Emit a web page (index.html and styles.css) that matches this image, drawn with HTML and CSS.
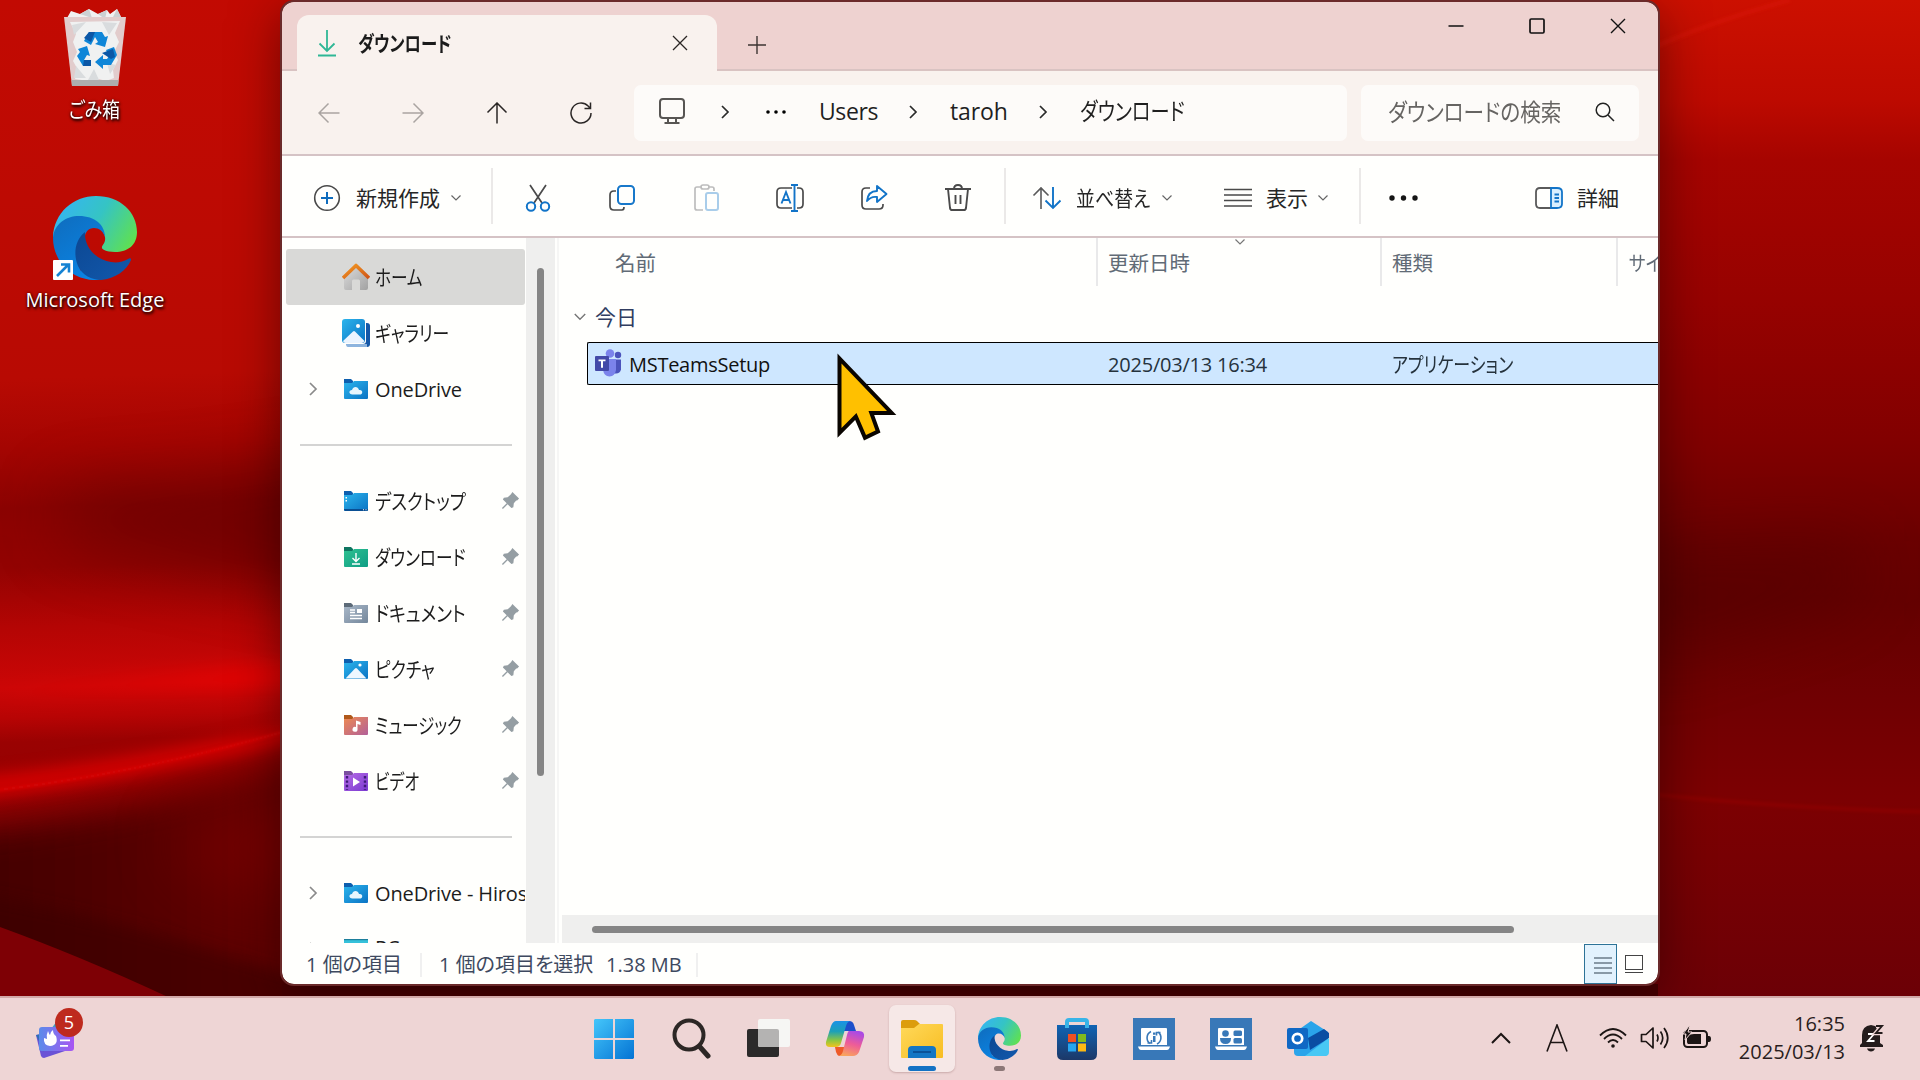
FILE: index.html
```
<!DOCTYPE html>
<html lang="ja">
<head>
<meta charset="utf-8">
<title>ダウンロード</title>
<link rel="stylesheet" href="styles.css">
</head>
<body>
<svg width="0" height="0" class="defs" aria-hidden="true">
  <defs>
    <linearGradient id="gBlue" x1="0" y1="0" x2="1" y2="1"><stop offset="0" stop-color="#2cb5ec"/><stop offset="1" stop-color="#0b73c4"/></linearGradient>
    <linearGradient id="gGreen" x1="0" y1="0" x2="1" y2="1"><stop offset="0" stop-color="#2fc191"/><stop offset="1" stop-color="#0f9d84"/></linearGradient>
    <linearGradient id="gGray" x1="0" y1="0" x2="1" y2="1"><stop offset="0" stop-color="#a9b8c8"/><stop offset="1" stop-color="#74879b"/></linearGradient>
    <linearGradient id="gMusic" x1="0" y1="0" x2="1" y2="1"><stop offset="0" stop-color="#ee8a50"/><stop offset="1" stop-color="#b2609a"/></linearGradient>
    <linearGradient id="gVideo" x1="0" y1="0" x2="1" y2="1"><stop offset="0" stop-color="#b66ce6"/><stop offset="1" stop-color="#7a3ad0"/></linearGradient>
    <linearGradient id="gRoof" x1="0" y1="0" x2="1" y2="1"><stop offset="0" stop-color="#f39a22"/><stop offset="1" stop-color="#cf5418"/></linearGradient>
    <linearGradient id="gWall" x1="0" y1="0" x2="1" y2="1"><stop offset="0" stop-color="#dcdcdc"/><stop offset="1" stop-color="#a2a2a2"/></linearGradient>
    <linearGradient id="gEdgeTop" x1="0" y1=".3" x2="1" y2=".7"><stop offset="0" stop-color="#35b5f2"/><stop offset=".5" stop-color="#35c4c4"/><stop offset="1" stop-color="#5fe052"/></linearGradient>
    <linearGradient id="gEdgeMid" x1="0" y1="0" x2=".6" y2="1"><stop offset="0" stop-color="#0f6cbd"/><stop offset="1" stop-color="#0a84e4"/></linearGradient>
    <linearGradient id="gEdgeLow" x1="0" y1="0" x2="1" y2="1"><stop offset="0" stop-color="#0c4792"/><stop offset="1" stop-color="#1259ad"/></linearGradient>
    <symbol id="edge" viewBox="0 0 84 84">
      <path fill="url(#gEdgeTop)" d="M0 41C1 17 20 0 43 0c24 0 41 16 41 36 0 13-9 20-22 20-9 0-14-3-13-5 0-2 4-4 3-10C51 34 44 28 32 24z"/>
      <path fill="url(#gEdgeMid)" d="M0 42c1-14 13-22 26-22 16 0 26 9 26 21-2-6-6-9-11-9-6 0-10 5-9 12l-5 30 20 10C20 86 0 66 0 42z"/>
      <path fill="url(#gEdgeLow)" d="M32 36c-10 8-12 22-7 34 4 9 14 14 23 14 14-1 26-10 30-20 0-2-1-2-3-1-5 3-11 4-17 3-14-2-27-14-26-30z"/>
    </symbol>
    <symbol id="chevR" viewBox="0 0 10 16"><path d="M2 2l6 6-6 6" fill="none" stroke="currentColor" stroke-width="1.700"/></symbol>
    <symbol id="chevD" viewBox="0 0 12 8"><path d="M1.500 1.500l4.500 4.500 4.500-4.500" fill="none" stroke="currentColor" stroke-width="1.200"/></symbol>
    <symbol id="pin" viewBox="0 0 20 20"><path fill="#959ea3" d="M12 1l7 7-2 2-1 0-2.500 3-.5 4-2 1-4-4L2 19l-1-1 5-5-4-4 1-2 4-.5 3.500-3z"/></symbol>
    <symbol id="fOne" viewBox="0 0 24 20"><path fill="#0d5fae" d="M0 0h7l2 2v4H0z"/><path fill="url(#gBlue)" d="M0 4h8l2-2h14v17a1 1 0 0 1-1 1H1a1 1 0 0 1-1-1z"/><path fill="#e8f6fd" d="M8.500 15.500c-4 0-4-4.500-.5-4.500 1-4 6-4 7 0 4-1 4.500 4.500.5 4.500z"/></symbol>
    <symbol id="fDesk" viewBox="0 0 24 20"><path fill="#0d5fae" d="M0 0h7l2 2v4H0z"/><path fill="url(#gBlue)" d="M0 4h8l2-2h14v17a1 1 0 0 1-1 1H1a1 1 0 0 1-1-1z"/><path fill="#0a4f93" d="M0 18h24v1l-1 1H1l-1-1z"/><path fill="#fff" d="M1.500 6h1.500v1.500H1.500zM1.500 9h1.500v1.500H1.500zM19 18.300h1v1h-1zM21.500 18.300h1v1h-1z"/></symbol>
    <symbol id="fDown" viewBox="0 0 24 20"><path fill="#0f7560" d="M0 0h7l2 2v4H0z"/><path fill="url(#gGreen)" d="M0 4h8l2-2h14v17a1 1 0 0 1-1 1H1a1 1 0 0 1-1-1z"/><path fill="none" stroke="#fff" stroke-width="1.400" d="M12 6v8M8.500 11l3.500 3.500 3.500-3.500M8 17h8"/></symbol>
    <symbol id="fDoc" viewBox="0 0 24 20"><path fill="#5d6b78" d="M0 0h7l2 2v4H0z"/><path fill="url(#gGray)" d="M0 4h8l2-2h14v17a1 1 0 0 1-1 1H1a1 1 0 0 1-1-1z"/><path fill="none" stroke="#fff" stroke-width="1.300" d="M6 7h5M6 9.500h5M6 12.500h12M6 15.500h12"/><path fill="#fff" d="M13 6h5v4h-5z"/></symbol>
    <symbol id="fPic" viewBox="0 0 24 20"><path fill="#0d5fae" d="M0 0h7l2 2v4H0z"/><path fill="url(#gBlue)" d="M0 4h8l2-2h14v17a1 1 0 0 1-1 1H1a1 1 0 0 1-1-1z"/><path fill="#eef7ff" d="M1.500 19.500L11 9.500q1-1 2 0l9.500 10z"/><circle cx="16" cy="6" r="1.600" fill="#fff"/></symbol>
    <symbol id="fMus" viewBox="0 0 24 20"><path fill="#b0591a" d="M0 0h7l2 2v4H0z"/><path fill="url(#gMusic)" d="M0 4h8l2-2h14v17a1 1 0 0 1-1 1H1a1 1 0 0 1-1-1z"/><path fill="#fff" d="M12 5.500l4.500 1.500v3l-3-1v5a2.500 2.500 0 1 1-1.500-2z"/></symbol>
    <symbol id="fVid" viewBox="0 0 24 20"><path fill="#7b4fa0" d="M0 0h7l2 2v4H0z"/><path fill="url(#gVideo)" d="M0 4h8l2-2h14v17a1 1 0 0 1-1 1H1a1 1 0 0 1-1-1z"/><path fill="#fff" d="M9 6.500l7 4.500-7 4.500z"/><path fill="none" stroke="#3d1a78" stroke-width="2.400" stroke-dasharray="2.400 2" d="M3 5v14M21 5v14"/></symbol>
  </defs>
</svg>

<svg class="wallpaper" viewBox="0 0 1920 1080" preserveAspectRatio="none" aria-hidden="true">
  <defs>
    <linearGradient id="wl" x1="0" y1="0" x2="30" y2="996" gradientUnits="userSpaceOnUse">
      <stop offset="0" stop-color="#c20a02"/><stop offset=".2" stop-color="#bd0a03"/><stop offset=".38" stop-color="#b80a03"/><stop offset=".45" stop-color="#a40502"/><stop offset=".51" stop-color="#8b0302"/><stop offset=".57" stop-color="#930302"/><stop offset=".63" stop-color="#b40504"/><stop offset=".69" stop-color="#cb0606"/><stop offset=".72" stop-color="#b80404"/><stop offset=".745" stop-color="#9a0202"/><stop offset="1" stop-color="#7c0004"/>
    </linearGradient>
    <linearGradient id="wr" x1="0" y1="0" x2="0" y2="996" gradientUnits="userSpaceOnUse">
      <stop offset="0" stop-color="#cc1000"/><stop offset=".1" stop-color="#bd0a00"/><stop offset=".16" stop-color="#a60400"/><stop offset=".3" stop-color="#970200"/><stop offset=".44" stop-color="#820000"/><stop offset=".55" stop-color="#690000"/><stop offset=".6" stop-color="#640000"/><stop offset=".7" stop-color="#700002"/><stop offset=".8" stop-color="#7c0002"/><stop offset=".86" stop-color="#780003"/><stop offset="1" stop-color="#6c0006"/>
    </linearGradient>
    <linearGradient id="hi" x1="0" y1="0" x2="282" y2="0" gradientUnits="userSpaceOnUse"><stop offset="0" stop-color="#f00a08" stop-opacity=".05"/><stop offset="1" stop-color="#f00a08" stop-opacity=".6"/></linearGradient>
    <linearGradient id="fold" x1="0" y1="0" x2="282" y2="0" gradientUnits="userSpaceOnUse"><stop offset="0" stop-color="#440001"/><stop offset="1" stop-color="#640002"/></linearGradient>
    <filter id="b6" x="-20%" y="-100%" width="140%" height="300%"><feGaussianBlur stdDeviation="8"/></filter>
    <filter id="b15" x="-30%" y="-80%" width="160%" height="260%"><feGaussianBlur stdDeviation="17"/></filter>
    <filter id="b30" x="-60%" y="-120%" width="220%" height="340%"><feGaussianBlur stdDeviation="32"/></filter>
    <filter id="b2" x="-20%" y="-60%" width="140%" height="220%"><feGaussianBlur stdDeviation="1.500"/></filter>
  </defs>
  <rect width="960" height="1080" fill="url(#wl)"/>
  <rect x="960" width="960" height="1080" fill="url(#wr)"/>
  <path d="M60 490Q200 485 380 450V610Q200 570 60 540z" fill="#560000" opacity=".5" filter="url(#b30)"/>
  <path d="M-20 688Q150 672 380 652V684Q150 694-20 704z" fill="url(#hi)" filter="url(#b6)"/>
  <path d="M-40 830Q150 812 330 750V1060H-40z" fill="url(#fold)" filter="url(#b15)"/>
  <path d="M-20 776Q140 760 320 718V734Q140 780-20 798z" fill="#e80606" opacity=".75" filter="url(#b6)"/>
  <path d="M-10 791Q140 774 300 727" fill="none" stroke="#f20909" stroke-width="2" opacity=".6" filter="url(#b2)"/>
  <path d="M170 830L360 780V900L200 880z" fill="#820203" opacity=".6" filter="url(#b30)"/>
  <path d="M-20 895Q130 920 320 985V1040H-20z" fill="#3a0001" opacity=".6" filter="url(#b6)"/>
  <path d="M0 927Q80 956 168 997H0z" fill="#7e0005"/>
  <path d="M1650 49Q1710 22 1790 0" fill="none" stroke="#dc1608" stroke-width="5" opacity=".4" filter="url(#b2)"/>
  <path d="M1640 550L1860 540V600L1640 670z" fill="#500000" opacity=".45" filter="url(#b30)"/>
  <path d="M1650 794Q1780 808 1930 812" fill="none" stroke="#960000" stroke-width="4" opacity=".5" filter="url(#b2)"/>
  <rect x="282" y="984" width="1376" height="12" fill="#480002"/>
</svg>

<main class="desktop">
  <div class="shortcut bin">
    <svg width="62" height="78" viewBox="0 0 62 78">
      <path fill="#f1f1f1" d="M3 9l4-7 9 3 9-5 9 5 9-4 3 4 7-5 4 8v5H3z"/>
      <path fill="#ccd0d2" d="M16 5l9-5 3 9zM34 5l9-4-2 9zM53 0l4 8-9 2z"/>
      <path fill="#e2cccc" d="M0 8l62 0-8 69H8z"/>
      <path fill="#f0f1f1" d="M6 13l50-1-5 12 4 9-5 10 4 8-5 10 1 8-8 3-7-2-9 2-8-1-7-1 3-9-5-9 4-9-4-10 3-8z"/>
      <path fill="#d9dcde" d="M8 16l14-3-12 13zM43 54l9 2-6 9zM12 57l10 12H10zM38 13l15 1-8 12zM30 60l5 11H24z"/>
      <path fill="#adadad" d="M7.500 71h47l-.5 6H8z"/>
      <g fill="#0f86d8"><path d="M25 23h13l3 5 3-1-3 11-10-3 3-2-3-5-4 8-7-4z"/><path d="M14 40l9-3 3 10-3-1-3 5h7v6h-8l-6-10 3-4z"/><path d="M31 53l8-7v4h4l2-3-3-6 8-3 3 8-6 10h-8v4z"/></g>
      <path fill="#0b57a6" d="M25 23h6l-4 10-7-4zM20 51h7v6h-8zM38 44l11-4 2 8-4 2z"/>
    </svg>
    <span class="sx85">ごみ箱</span>
  </div>
  <div class="shortcut msedge">
    <div class="logo"><svg width="84" height="84"><use href="#edge"/></svg>
      <svg class="arrow" width="20" height="20" viewBox="0 0 20 20"><rect width="20" height="20" rx="1" fill="#fff"/><path d="M4 16L15.500 4.500M8 4.500h8v8" fill="none" stroke="#1583d3" stroke-width="2.600"/></svg></div>
    <span>Microsoft Edge</span>
  </div>

  <section class="window">
    <header class="titlebar">
      <div class="tab">
        <svg width="22" height="28" viewBox="0 0 22 28" fill="none" stroke="#2fb795" stroke-width="1.800"><path d="M11 1v21M3.500 14.500L11 22l7.500-7.500M2 26.500h18"/></svg>
        <span class="tab-title sx77">ダウンロード</span>
        <svg class="tab-close" width="16" height="16" viewBox="0 0 16 16" fill="none" stroke="#2b2624" stroke-width="1.300"><path d="M1 1l14 14M15 1L1 15"/></svg>
      </div>
      <svg class="newtab" width="18" height="18" viewBox="0 0 18 18" fill="none" stroke="#3d3432" stroke-width="1.400"><path d="M9 0v18M0 9h18"/></svg>
      <div class="caption">
        <svg width="16" height="16" viewBox="0 0 16 16" stroke="#111" stroke-width="1.400"><path d="M.5 8h15"/></svg>
        <svg width="16" height="16" viewBox="0 0 16 16" fill="none" stroke="#111" stroke-width="1.700"><rect x="1" y="1" width="14" height="14" rx="1.200"/></svg>
        <svg width="16" height="16" viewBox="0 0 16 16" fill="none" stroke="#111" stroke-width="1.400"><path d="M1 1l14 14M15 1L1 15"/></svg>
      </div>
    </header>

    <nav class="navbar">
      <div class="navbtns">
        <svg class="dim" viewBox="0 0 22 22"><path d="M21.500 11H1M10.500 1.500L1 11l9.500 9.500"/></svg>
        <svg class="dim" viewBox="0 0 22 22"><path d="M.5 11H21M11.500 1.500L21 11l-9.500 9.500"/></svg>
        <svg viewBox="0 0 22 22"><path d="M11 21.500V1M1.500 10.500L11 1l9.500 9.500"/></svg>
        <svg viewBox="0 0 22 22"><path d="M21 11a10 10 0 1 1-2.900-7L20 6M20.500 .5v6h-6"/></svg>
      </div>
      <div class="address">
        <svg class="pc" width="28" height="28" viewBox="0 0 28 28" fill="none" stroke="#575553" stroke-width="2"><rect x="2" y="2" width="24" height="19" rx="3"/><path d="M10 21v4M18 21v4M6.500 26h15"/></svg>
        <svg class="sep s1" width="10" height="16"><use href="#chevR"/></svg>
        <svg class="more" width="20" height="4" viewBox="0 0 20 4"><circle cx="2" cy="2" r="1.800"/><circle cx="10" cy="2" r="1.800"/><circle cx="18" cy="2" r="1.800"/></svg>
        <span class="crumb c1">Users</span>
        <svg class="sep s2" width="10" height="16"><use href="#chevR"/></svg>
        <span class="crumb c2">taroh</span>
        <svg class="sep s3" width="10" height="16"><use href="#chevR"/></svg>
        <span class="crumb sx79">ダウンロード</span>
      </div>
      <div class="search"><span class="sx85">ダウンロードの検索</span>
        <svg width="20" height="20" viewBox="0 0 20 20" fill="none" stroke="#222" stroke-width="1.500"><circle cx="8" cy="8" r="6.800"/><path d="M13 13l6 6"/></svg>
      </div>
    </nav>

    <div class="toolbar">
      <div class="tool new"><svg width="28" height="28" viewBox="0 0 28 28" fill="none" stroke-width="1.600"><circle cx="14" cy="14" r="12.300" stroke="#4a4a4a"/><path stroke="#0f6cbd" stroke-width="2" d="M14 8v12M8 14h12"/></svg><span>新規作成</span><svg class="chev" width="12" height="8"><use href="#chevD"/></svg></div>
      <div class="tool icons">
        <svg viewBox="0 0 28 28"><path stroke="#4a4a4a" d="M6 1l12 18M22 1L10 19"/><g stroke="#1274c8" stroke-width="2"><circle cx="7" cy="22.500" r="4.200"/><circle cx="21" cy="22.500" r="4.200"/></g></svg>
        <svg viewBox="0 0 28 28"><path stroke="#4a4a4a" d="M8 7H6q-4 0-4 4v11q0 4 4 4h8q2 0 2-3"/><rect x="10" y="2" width="16" height="18" rx="3.500" stroke="#1878ca" stroke-width="2"/></svg>
        <svg viewBox="0 0 28 28"><path stroke="#bdbdbd" d="M9 3H5q-2 0-2 2v19q0 2 2 2h6M17 3h3q2 0 2 2v2"/><rect x="9" y="1" width="8" height="4" rx="2" stroke="#bdbdbd"/><rect x="14" y="9" width="12" height="17" rx="2" stroke="#a9cdea" stroke-width="2"/></svg>
        <svg viewBox="0 0 28 28"><path stroke="#4a4a4a" d="M16 4H5q-4 0-4 4v12q0 4 4 4h11M21 4h2q4 0 4 4v12q0 4-4 4h-2"/><path stroke="#1274c8" stroke-width="1.900" d="M5.500 19.500L10 8l4.500 11.500M7 16h6M18.500 1v26M15 1h7M15 27h7"/></svg>
        <svg viewBox="0 0 28 28"><path stroke="#4a4a4a" d="M10 4H6q-4 0-4 4v13q0 4 4 4h13q4 0 4-4v-1"/><path stroke="#1274c8" stroke-width="1.900" stroke-linejoin="round" d="M17 2l9.500 8L17 18v-5q-6-1-10 4 1-10 10-10z"/></svg>
        <svg viewBox="0 0 28 28"><path stroke="#4a4a4a" stroke-width="1.900" d="M1 5h26M4 5l2 19q.3 2 2 2h12q1.700 0 2-2l2-19M10 5q0-4 4-4t4 4M11.500 11v9M16.500 11v9"/></svg>
      </div>
      <div class="tool sort"><svg width="30" height="24" viewBox="0 0 30 24" fill="none" stroke-width="1.600"><path stroke="#5a5a5a" d="M9 23V2M1.500 9.500L9 2l7.500 7.500"/><path stroke="#1274c8" stroke-width="1.900" d="M21 1v21M13.500 14.500L21 22l7.500-7.500"/></svg><span class="sx90">並べ替え</span><svg class="chev" width="12" height="8"><use href="#chevD"/></svg></div>
      <div class="tool view"><svg width="28" height="20" viewBox="0 0 28 20" stroke="#4a4a4a" stroke-width="1.500"><path d="M0 1.500h28M0 7h28M0 12.500h28M0 18h28"/></svg><span>表示</span><svg class="chev" width="12" height="8"><use href="#chevD"/></svg></div>
      <div class="tool dots"><svg width="30" height="6" viewBox="0 0 30 6" fill="#151515"><circle cx="3" cy="3" r="2.700"/><circle cx="14.500" cy="3" r="2.700"/><circle cx="26" cy="3" r="2.700"/></svg></div>
      <div class="tool details"><svg width="30" height="24" viewBox="0 0 30 24" fill="none" stroke-width="1.800"><path stroke="#5a5a5a" d="M17 2H6Q2 2 2 6v12q0 4 4 4h11"/><path stroke="#1274c8" fill="#d9efff" d="M17 2h6q5 0 5 4v12q0 4-5 4h-6z"/><path stroke="#1274c8" d="M20.500 8.500h4.500M20.500 12h4.500M20.500 15.500h4.500"/></svg><span>詳細</span></div>
    </div>

    <div class="content">
      <aside class="sidebar">
        <div class="item active"><svg class="ic big" viewBox="0 0 28 28"><path fill="url(#gWall)" d="M2 13L14 3l12 10v12a2 2 0 0 1-2 2h-6V18q0-1.500-1.500-1.500h-5Q10 16.500 10 18v9H4a2 2 0 0 1-2-2z"/><path fill="none" stroke="url(#gRoof)" stroke-width="3.600" stroke-linejoin="round" d="M1 15L14 2.500 27 15"/></svg><span class="sx78">ホーム</span></div>
        <div class="item"><svg class="ic big" viewBox="0 0 28 28"><path fill="#1558a8" d="M7 4h18q3 0 3 3v18q0 3-3 3H7l-3-3z"/><path fill="#8db4de" d="M4 25h21v3H6q-2 0-2-3z"/><rect width="24" height="25" fill="#fffffd" rx="3"/><rect width="23" height="24" rx="3" fill="url(#gBlue)"/><path fill="#eaf4ff" d="M1 22L11 12.500q1-1 2 0L22.500 22q-1 2-3 2h-16q-2 0-2.500-2z"/><circle cx="16" cy="7" r="2" fill="#fff"/></svg><span class="sx79">ギャラリー</span></div>
        <div class="item"><svg class="exp" width="10" height="16"><use href="#chevR"/></svg><svg class="ic"><use href="#fOne"/></svg><span class="lat">OneDrive</span></div>
        <div class="item line"><hr></div>
        <div class="item"><svg class="ic"><use href="#fDesk"/></svg><span class="sx82">デスクトップ</span><svg class="pin"><use href="#pin"/></svg></div>
        <div class="item"><svg class="ic"><use href="#fDown"/></svg><span class="sx78">ダウンロード</span><svg class="pin"><use href="#pin"/></svg></div>
        <div class="item"><svg class="ic"><use href="#fDoc"/></svg><span class="sx83">ドキュメント</span><svg class="pin"><use href="#pin"/></svg></div>
        <div class="item"><svg class="ic"><use href="#fPic"/></svg><span class="sx79">ピクチャ</span><svg class="pin"><use href="#pin"/></svg></div>
        <div class="item"><svg class="ic"><use href="#fMus"/></svg><span class="sx77">ミュージック</span><svg class="pin"><use href="#pin"/></svg></div>
        <div class="item"><svg class="ic"><use href="#fVid"/></svg><span class="sx75">ビデオ</span><svg class="pin"><use href="#pin"/></svg></div>
        <div class="item line"><hr></div>
        <div class="item"><svg class="exp" width="10" height="16"><use href="#chevR"/></svg><svg class="ic"><use href="#fOne"/></svg><span class="lat">OneDrive - Hiros</span></div>
        <div class="item thispc"><svg class="exp" width="10" height="16"><use href="#chevR"/></svg><svg class="ic" viewBox="0 0 24 20"><path fill="#36c1da" d="M0 0h24v20H0z"/><path fill="#1d7f9c" d="M0 0h24v1.200H0z"/></svg><span class="lat">PC</span></div>
      </aside>
      <div class="vtrack"><div class="vthumb"></div></div>
      <div class="list">
        <div class="columns">
          <div class="col name">名前</div>
          <div class="col date">更新日時<svg class="sorted" width="12" height="8"><use href="#chevD"/></svg></div>
          <div class="col kind">種類</div>
          <div class="col size"><span class="sx85">サイズ</span></div>
        </div>
        <div class="group"><svg width="14" height="10" viewBox="0 0 12 8"><use href="#chevD"/></svg><span>今日</span></div>
        <div class="file">
          <svg width="27" height="28" viewBox="0 0 27 28"><circle cx="23" cy="6" r="3.200" fill="#4b53bc"/><path fill="#4b53bc" d="M19 10.500h7v10q-1 4-5 4h-2z"/><circle cx="15" cy="4.500" r="4.300" fill="#7b83eb"/><path fill="#7b83eb" d="M8 10h13v11q-1 6-6.500 6.500Q9 27 8 21z"/><rect y="7" width="14" height="15" rx="1" fill="#4349a8"/><path fill="#fff" d="M3.500 10.500h7v1.800H8v6.500H6v-6.500H3.500z"/></svg>
          <span class="fname">MSTeamsSetup</span><span class="fdate">2025/03/13 16:34</span><span class="fkind sx80">アプリケーション</span>
        </div>
        <div class="empty"></div>
        <div class="htrack"><div class="hthumb"></div></div>
      </div>
    </div>

    <footer class="status">
      <span class="count">1 個の項目</span>
      <span class="sel">1 個の項目を選択</span>
      <span class="bytes">1.38 MB</span>
      <div class="modes">
        <div class="mode on"><svg width="18" height="17" viewBox="0 0 18 17" stroke="#2f4150" stroke-width="1.200"><path d="M0 1h18M0 6h18M0 11h18M0 16h18"/></svg></div>
        <div class="mode"><svg width="18" height="18" viewBox="0 0 18 18" fill="none" stroke="#444" stroke-width="1"><rect x=".5" y=".5" width="17" height="14"/><path d="M0 17.500h18"/></svg></div>
      </div>
    </footer>
  </section>

  <svg class="cursor" width="70" height="96" viewBox="-4 -4 70 96"><path d="M4.500 8.500L50 56H31.500L38.500 75.500 29 80 19.500 58 4.500 73z" fill="#ffc000" stroke="#0a0500" stroke-width="8" paint-order="stroke" stroke-miterlimit="8"/></svg>
</main>

<footer class="taskbar">
  <div class="widgets">
    <svg width="40" height="40" viewBox="0 0 40 40"><defs><linearGradient id="gw"><stop offset="0" stop-color="#5b8bea"/><stop offset="1" stop-color="#a855f2"/></linearGradient></defs><path fill="#6a52d6" d="M0 15l24-4 5 20-21 7q-2 0-3-2z"/><path fill="#2f6fb5" d="M0 15l5-1 3 18z"/><path fill="#3e9fc4" d="M15 9l6-8 10 6v6z"/><rect x="3" y="7" width="35" height="24" rx="3" fill="url(#gw)"/><path fill="#fff" d="M12 11q1 3 2 4 0-3 3-5 0 4 3 6 3 9-6 10-7-1-6-8l3 1q-1-4 1-8zM24 19.500h10v1.700H24zM24 25h8v1.700h-8z"/></svg>
    <span class="badge">5</span>
  </div>
  <div class="apps">
    <div class="app"><svg width="42" height="42" viewBox="0 0 42 42"><defs><linearGradient id="gs" x1="0" y1="0" x2="42" y2="42" gradientUnits="userSpaceOnUse"><stop offset="0" stop-color="#46c8fb"/><stop offset="1" stop-color="#0271d3"/></linearGradient></defs><path fill="url(#gs)" d="M2 1h18v19H1V2zM22 1h18l1 1v18H22zM1 22h19v19H2l-1-1zM22 22h19v18l-1 1H22z"/></svg></div>
    <div class="app"><svg width="40" height="42" viewBox="0 0 40 42" fill="none" stroke="#2c2725"><circle cx="18" cy="17" r="14.500" stroke-width="4"/><path stroke-width="5" stroke-linecap="round" d="M29 29l8 9"/></svg></div>
    <div class="app"><svg width="44" height="42" viewBox="0 0 44 42"><rect x="1" y="11" width="32" height="28" rx="2" fill="#2b2a2a"/><rect x="12" y="1" width="32" height="28" rx="2" fill="#f6f6f4"/><path fill="#b4b3b2" d="M12 11h19q2 0 2 2v16H14q-2 0-2-2z"/></svg></div>
    <div class="app"><svg width="40" height="38" viewBox="0 0 40 38"><defs><linearGradient id="c1" x1="0" y1="0" x2="0" y2="1"><stop offset="0" stop-color="#1a92e6"/><stop offset=".4" stop-color="#1ca0b8"/><stop offset=".75" stop-color="#8ec63f"/><stop offset="1" stop-color="#f2c31c"/></linearGradient><linearGradient id="c2" x1=".6" y1="0" x2=".3" y2="1"><stop offset="0" stop-color="#a94ae6"/><stop offset=".5" stop-color="#ee5c98"/><stop offset="1" stop-color="#f9a45c"/></linearGradient></defs><path fill="#1c4fcb" d="M20 1h4q4 0 5 4l2 6H18z"/><path fill="#ee5a28" d="M10 27h11l-3 7q-1 2-4 2-2-1-3-4z"/><path fill="url(#c1)" d="M11 1h14q-3 1-4 5l-5 17q-1 4-5 4H5q-5 0-4-5L6 6q2-5 5-5z"/><path fill="url(#c2)" d="M24 11h10q6 0 5 6l-5 15q-2 4-6 4H14q3-1 4-5l4-16q1-4 2-4z"/></svg></div>
    <div class="app open"><svg width="42" height="40" viewBox="0 0 42 40"><defs><linearGradient id="ge" x1="0" y1="0" x2="1" y2="1"><stop offset="0" stop-color="#ffd95a"/><stop offset="1" stop-color="#f8bd22"/></linearGradient></defs><path fill="#dc9d0c" d="M0 3q0-2 2-2h11q2 0 3 1l3 3v6H0z"/><path fill="url(#ge)" d="M0 9h13l5-4h23q1 0 1 1v32q0 1-1 1H1q-1 0-1-1z"/><path fill="#1476c4" d="M7 39V31q0-4 4-4h20q4 0 4 4v8z"/><path stroke="#0b4f94" stroke-width="1.800" d="M12 33h18"/></svg><i class="bar"></i></div>
    <div class="app"><svg width="43" height="43"><use href="#edge"/></svg><i class="bar small"></i></div>
    <div class="app"><svg width="42" height="44" viewBox="0 0 42 44"><defs><linearGradient id="gt" x1="0" y1="0" x2="0" y2="1"><stop offset="0" stop-color="#0f64b4"/><stop offset="1" stop-color="#1c3868"/></linearGradient></defs><path fill="url(#gt)" d="M1 8h40v29q0 6-6 6H7q-6 0-6-6z"/><path fill="none" stroke="#38b4e8" stroke-width="4" d="M11 11V5q0-2 2-2h16q2 0 2 2v6"/><path fill="#f05022" d="M12 17h8v8h-8z"/><path fill="#7fba1e" d="M22 17h8v8h-8z"/><path fill="#25a6f0" d="M12 26.500h8v8h-8z"/><path fill="#fdb913" d="M22 26.500h8v8h-8z"/></svg></div>
    <div class="app"><svg width="42" height="42" viewBox="0 0 42 42"><path fill="#3878b8" d="M0 0h42v42H0z"/><path fill="#fff" d="M9 10h24q1 0 1 1v16H8V11q0-1 1-1zM5 28.500h32q-1 3.500-3 3.500H8q-2 0-3-3.500z"/><g fill="none" stroke="#3878b8" stroke-width="1.600"><path d="M18 13.500a7 7 0 0 0-1 12M24 26a7 7 0 0 0 1-12M14.500 25h4v-3M27.500 14.500h-4v3"/></g><path fill="#3878b8" d="M20 14.500h2.500v2.200H20zM20 18h2.500v6H20z"/></svg></div>
    <div class="app"><svg width="42" height="42" viewBox="0 0 42 42"><path fill="#3878b8" d="M0 0h42v42H0z"/><path fill="#fff" d="M9 10h24q1 0 1 1v16H8V11q0-1 1-1zM5 28.500h32q-1 3.500-3 3.500H8q-2 0-3-3.500z"/><g fill="#3878b8"><circle cx="15.500" cy="15.500" r="3.300"/><path d="M10 20h11q0 6-5.500 6T10 20z"/><rect x="23.500" y="12.500" width="8.500" height="5.500" rx="1.500"/><rect x="23.500" y="20" width="8.500" height="5.500" rx="1.500"/></g></svg></div>
    <div class="app"><svg width="44" height="38" viewBox="0 0 44 38"><path fill="#2aa4ea" d="M8 13L25 1l17 11v20q0 4-4 4H12q-4 0-4-4z"/><path fill="#0a4da2" d="M22 18l16-9 5 4v5L24 30z"/><path fill="#48c8f4" d="M19 36l24-18v14q0 4-4 4z"/><rect x="1" y="8" width="21" height="21" rx="2" fill="#1068c4"/><circle cx="11.500" cy="18.500" r="4.700" fill="none" stroke="#fff" stroke-width="2.700"/></svg></div>
  </div>
  <div class="tray">
    <svg class="t-up" width="20" height="12" viewBox="0 0 20 12" fill="none" stroke="#1c1514" stroke-width="2"><path d="M1 11l9-9 9 9"/></svg>
    <svg class="t-ime" width="22" height="28" viewBox="0 0 22 28" fill="none" stroke="#1c1514" stroke-width="1.600"><path d="M1 27.500L11 1l10 26.500M4.500 18.500h13"/></svg>
    <svg class="t-wifi" width="28" height="22" viewBox="0 0 28 22" fill="none" stroke="#1c1514" stroke-width="1.800"><path d="M1 8.500q13-13 26 0M5 12q9-9 18 0M9 15.500q5-5 10 0"/><circle cx="14" cy="19" r="1.800" fill="#1c1514" stroke="none"/></svg>
    <svg class="t-snd" width="30" height="24" viewBox="0 0 30 24" fill="none" stroke="#1c1514" stroke-width="1.700" stroke-linejoin="round"><path d="M1.500 8.500h4.500l7-6.500v20l-7-6.500H1.500zM17 8.500q2 3.500 0 7M20.500 5.500q4.500 6.500 0 13M24 2q7.500 10 0 20"/></svg>
    <svg class="t-bat" width="30" height="24" viewBox="0 0 30 24"><rect x="2" y="5" width="23" height="16" rx="3.500" fill="none" stroke="#1c1514" stroke-width="2"/><path fill="#1c1514" d="M5 9l7-1h7v10H6q-1-1-1-2zM26 10h1q2 0 2 3t-2 3h-1z"/><path d="M7 0L1 8h3l-1 6 7-8H6l2-6z" fill="#1c1514" stroke="#eed5d5" stroke-width="1"/></svg>
    <div class="clock"><span>16:35</span><span>2025/03/13</span></div>
    <svg class="t-bell" width="26" height="28" viewBox="0 0 26 28"><path fill="#241c1c" d="M3 19V11q0-9 9-10 9 1 9 10v8l3 2v2H1v-2zM8 24.500h8q-1 3-4 3t-4-3z"/><path d="M9 10h6l-6 7h6.500" fill="none" stroke="#fff" stroke-width="1.800"/><path d="M17 2h6l-6 7h6.500" fill="none" stroke="#eed5d5" stroke-width="4.500"/><path d="M17 2h6l-6 7h6.500" fill="none" stroke="#241c1c" stroke-width="1.900"/></svg>
  </div>
</footer>
</body>
</html>
```
FILE: styles.css
```
* { box-sizing: border-box; }
body {
  margin: 0;
  width: 1920px;
  height: 1080px;
  overflow: hidden;
  background: #480002;
  font-family: "Open Sans", "Noto Sans CJK JP", sans-serif;
  font-size: 21px;
  line-height: 28px;
  color: #262626;
  display: flex;
  flex-direction: column;
}
svg { display: block; flex: none; }
span { white-space: nowrap; font-feature-settings: "palt"; }
.defs { position: absolute; }
.wallpaper { position: absolute; inset: 0; width: 1920px; height: 1080px; }

/* condensed kana widths */
.sx75, .sx77, .sx78, .sx79, .sx80, .sx82, .sx83, .sx85, .sx90 { display: inline-block; transform-origin: 0 50%; }
.sx75 { transform: scaleX(.755); }
.sx77 { transform: scaleX(.78); }
.sx78 { transform: scaleX(.79); }
.sx79 { transform: scaleX(.8); }
.sx80 { transform: scaleX(.81); }
.sx82 { transform: scaleX(.83); }
.sx83 { transform: scaleX(.845); }
.sx85 { transform: scaleX(.858); }
.sx90 { transform: scaleX(.9); }

.desktop { position: relative; height: 996px; flex: none; }

/* desktop icons */
.shortcut {
  position: absolute;
  left: 0;
  width: 190px;
  display: flex;
  flex-direction: column;
  align-items: center;
  color: #fff;
  font-size: 20px;
  text-shadow: 1px 2px 3px #000, 0 0 3px rgba(0,0,0,.7);
}
.bin { top: 9px; gap: 8px; }
.bin span { font-size: 21px; transform-origin: 42% 50%; }
.msedge { top: 196px; gap: 6px; }
.logo { position: relative; }
.arrow { position: absolute; left: 0; bottom: 0; }

/* window */
.window {
  position: absolute;
  left: 282px;
  top: 2px;
  width: 1376px;
  height: 982px;
  border-radius: 12px;
  overflow: hidden;
  background: #fffffd;
  display: flex;
  flex-direction: column;
  outline: 2px solid #6b2a2a;
  box-shadow: 0 12px 50px rgba(20,0,0,.5);
}
.titlebar { height: 69px; background: #eed2d0; border-bottom: 2px solid #d9c3c2; display: flex; padding-left: 15px; flex: none; }
.tab {
  width: 420px;
  height: 56px;
  margin-top: 13px;
  border-radius: 12px 12px 0 0;
  background: #f9f2ee;
  display: flex;
  align-items: center;
  padding: 0 29px 1px 19px;
}
.tab-title { margin-left: 20px; font-weight: 600; color: #1b1b1b; }
.tab-close { margin-left: auto; }
.newtab { margin: 34px 0 0 31px; }
.caption { margin-left: auto; display: flex; height: 48px; }
.caption svg { margin: 16px 32px 0 33px; }

.navbar { height: 85px; background: #f9f2ee; border-bottom: 2px solid #d5c3c5; display: flex; align-items: center; padding-right: 19px; flex: none; }
.navbtns { display: flex; gap: 62px; padding-left: 36px; width: 352px; }
.navbtns svg { width: 22px; height: 22px; fill: none; stroke: #2a2625; stroke-width: 1.500; }
.navbtns .dim { stroke: #aaa4a1; }
.address { width: 713px; height: 56px; background: #fdfbf9; border-radius: 7px; display: flex; align-items: center; padding: 0 0 1px 24px; font-size: 24px; color: #1f1f1f; }
.pc { margin-top: -2px; }
.sep { color: #2a2a2a; }
.s1 { margin-left: 34px; }
.more { margin-left: 36px; }
.c1 { margin-left: 33px; width: 59px; letter-spacing: -.4px; }
.address .c1, .address .c2 { font-size: 23px; }
.c2 { width: 58px; letter-spacing: -.1px; }
.s2 { margin: 0 32px 0 30px; }
.s3 { margin: 0 32px 0 30px; }
.address .crumb { padding-bottom: 2px; }
.search { margin-left: 14px; width: 278px; height: 56px; background: #fdfbf9; border-radius: 7px; display: flex; align-items: center; justify-content: space-between; padding: 0 24px 2px 27px; font-size: 24px; color: #666462; }
.search span { width: 172px; }

.toolbar { height: 82px; border-bottom: 2px solid #d5c3c5; display: flex; align-items: center; flex: none; }
.tool { display: flex; align-items: center; height: 56px; padding-top: 3px; }
.chev { color: #666; }
.new { width: 211px; padding-left: 31px; gap: 15px; border-right: 2px solid #ebe9e8; }
.new .chev { margin-left: -5px; }
.icons { width: 513px; gap: 56px; padding-left: 31px; border-right: 2px solid #ebe9e8; }
.icons svg { width: 28px; height: 28px; fill: none; stroke-width: 1.700; }
.sort { width: 167px; padding-left: 26px; gap: 14px; }
.sort span { width: 74px; }
.sort .chev { margin-left: -3px; }
.view { width: 188px; padding-left: 51px; gap: 14px; border-right: 2px solid #ebe9e8; }
.view .chev { margin-left: -5px; }
.dots { padding-left: 28px; }
.details { margin-left: auto; padding-right: 39px; gap: 13px; }

.content { height: 705px; display: flex; flex: none; }
.sidebar { width: 244px; padding: 11px 0 0 4px; overflow: hidden; height: 705px; }
.item { height: 56px; width: 239px; display: flex; align-items: center; padding-left: 57px; position: relative; color: #1c1c1c; overflow: hidden; }
.item span { margin-left: 7px; }
.item .lat { font-size: 20px; letter-spacing: -.14px; padding-top: 2px; }
.item.thispc .lat { padding: 0 0 3px; }
.active { background: #d9d9d7; border-radius: 3px; padding-bottom: 1px; }
.ic { width: 24px; height: 20px; margin-left: 1px; }
.item .ic.big { width: 28px; height: 28px; margin-left: -1px; }
.ic.big + span { margin-left: 5px; }
.exp { color: #8a8a8a; margin: 0 26px 0 -35px; width: 10px; }
.item .exp + .ic { margin-left: 0; }
.pin { position: absolute; right: 5px; width: 19px; height: 19px; top: 18px; }
.line { padding: 0 13px 0 14px; }
.line hr { width: 100%; height: 2px; border: 0; margin: 0; background: #d4d4d3; }
.vtrack { width: 29px; background: #efefee; margin-right: 2px; padding: 30px 0 0 11px; }
.vthumb { width: 7px; height: 508px; border-radius: 4px; background: #858585; }
.list { flex: 1; display: flex; flex-direction: column; border-left: 2px solid #f6f6f5; min-width: 0; }
.columns { display: flex; height: 49px; color: #616b76; font-size: 20.500px; }
.col { position: relative; border-right: 2px solid #e9e9ea; line-height: 28px; padding: 11px 0 0 10px; flex: none; height: 48px; }
.name { width: 539px; padding-left: 56px; }
.date { width: 284px; }
.kind { width: 236px; }
.size { border: 0; flex: 1; overflow: hidden; white-space: nowrap; min-width: 0; padding-left: 11px; }
.sorted { position: absolute; left: 136px; top: 0; color: #777; }
.group { display: flex; align-items: center; height: 54px; margin-top: 1px; padding: 4px 0 0 14px; gap: 8px; color: #303d60; }
.group svg { color: #777; }
.file { flex: none; height: 43px; margin-left: 28px; border: 1px solid #000; border-right: 0; background: #cee7ff; display: flex; align-items: center; padding-left: 7px; font-size: 20px; color: #25323c; border-radius: 2px 0 0 2px; }
.file svg { margin-top: -2px; }
.fname { margin-left: 7px; width: 479px; letter-spacing: -.27px; color: #111; padding-top: 3px; }
.fdate { width: 284px; letter-spacing: -.21px; padding-top: 3px; }
.fkind { font-size: 21px; padding-top: 1px; }
.empty { flex: 1; }
.htrack { height: 28px; background: #efefee; margin-left: 3px; padding: 11px 0 0 30px; }
.hthumb { width: 922px; height: 7px; border-radius: 4px; background: #858585; }

.status { flex: 1; display: flex; align-items: center; padding-left: 24px; color: #3e495f; font-size: 20px; }
.status span { line-height: 24px; margin-top: 3px; }
.count { width: 116px; border-right: 2px solid #f0f0f0; }
.sel { padding-left: 17px; width: 184px; }
.bytes { width: 92px; border-right: 2px solid #f0f0f0; }
.modes { margin-left: auto; display: flex; height: 40px; padding-right: 8px; }
.mode { width: 33px; display: flex; align-items: center; justify-content: center; padding-top: 1px; }
.mode.on { border: 1px solid #2d7397; background: #e2f2fd; padding: 4px 0 0 4px; }

.cursor { position: absolute; left: 833px; top: 351px; }

/* taskbar */
.taskbar { position: relative; height: 84px; flex: none; background: #eed5d5; border-top: 2px solid #d2a9a9; display: flex; }
.widgets { position: relative; width: 575px; padding: 22px 0 0 36px; flex: none; }
.badge { position: absolute; left: 55px; top: 10px; width: 28px; height: 29px; border-radius: 50%; background: #be2a1e; color: #fff; font-size: 18px; line-height: 28px; text-align: center; }
.apps { display: flex; padding-bottom: 1px; }
.app { position: relative; width: 77.200px; display: flex; align-items: center; justify-content: center; }
.open::before { content: ""; position: absolute; width: 66px; height: 67px; top: 7px; border-radius: 7px; background: #f6e8e7; box-shadow: 0 1px 2px rgba(120,70,70,.3); }
.open svg { position: relative; }
.bar { position: absolute; bottom: 8px; width: 28px; height: 5px; border-radius: 3px; background: #1472c4; }
.bar.small { width: 11px; background: #8c7777; }
.tray { margin-left: auto; display: flex; align-items: center; padding: 0 35px 3px 0; }
.t-up { margin-right: 35px; }
.t-ime { margin-right: 31px; }
.t-wifi { margin-right: 13px; }
.t-snd { margin-right: 12px; }
.t-bat { margin-right: 27px; }
.clock { width: 106px; margin-right: 14px; display: flex; flex-direction: column; align-items: flex-end; font-size: 20px; line-height: 28px; color: #2a1d1d; }
```
